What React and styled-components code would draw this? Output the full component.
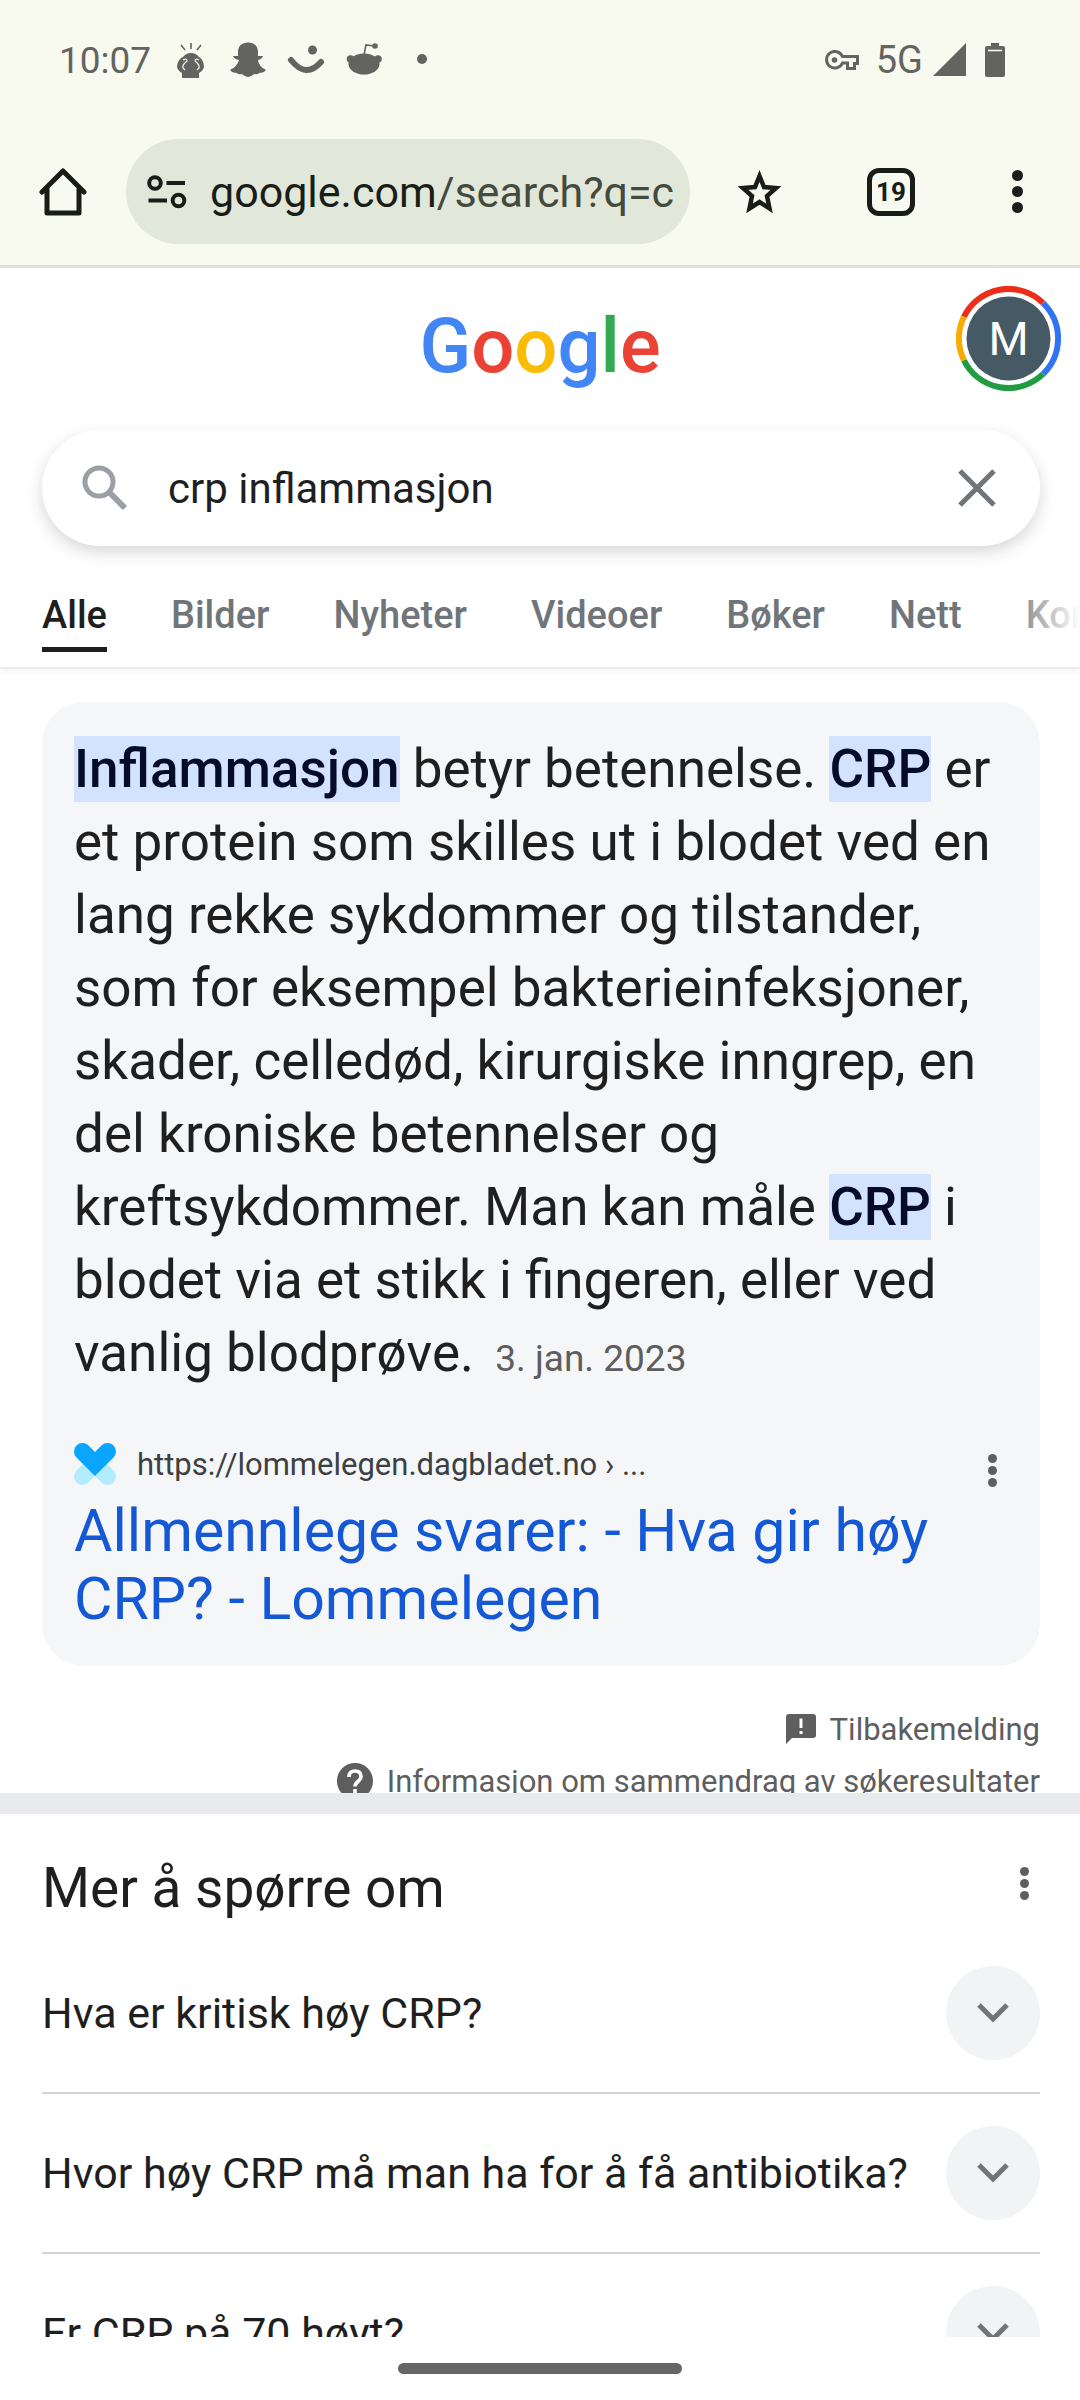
import React from "react";
import styled, { createGlobalStyle, css } from "styled-components";

const COLORS = {
  chrome: "#f8faf0",
  pill: "#e1e7d9",
  ink: "#191d17",
  status: "#63645f",
  text: "#1f1f1f",
  muted: "#70757a",
  grey: "#5e5e5e",
  link: "#1558d6",
  card: "#f5f6f8",
  mark: "#d3e3fd",
};

const TABS = ["Alle", "Bilder", "Nyheter", "Videoer", "Bøker", "Nett", "Kort"];

const QUESTIONS = [
  "Hva er kritisk høy CRP?",
  "Hvor høy CRP må man ha for å få antibiotika?",
  "Er CRP på 70 høyt?",
];

const LOGO = [
  ["G", "#4285f4"],
  ["o", "#ea4335"],
  ["o", "#fbbc05"],
  ["g", "#4285f4"],
  ["l", "#34a853"],
  ["e", "#ea4335"],
];

function MoreDots({ size, gap }) {
  const r = size / 2;
  const height = size * 3 + gap * 2;
  return (
    <svg width={size} height={height} fill="currentColor" aria-hidden="true">
      <circle cx={r} cy={r} r={r} />
      <circle cx={r} cy={height / 2} r={r} />
      <circle cx={r} cy={height - r} r={r} />
    </svg>
  );
}

function StatusBar() {
  return (
    <Status>
      <StatusGroup>
        <Clock>10:07</Clock>
        <NotificationIcons />
      </StatusGroup>
      <StatusGroup>
        <svg width="34" height="20" viewBox="0 0 34 20" fill="none" stroke="currentColor" strokeWidth="3">
          <path d="M17.5 6.5H32.5V13.5H29.5V18.5H22.5V13H17.5A8.3 8.3 0 1 1 17.5 6.5Z" />
          <circle cx="9.5" cy="10" r="2.8" fill="currentColor" stroke="none" />
        </svg>
        <Network>5G</Network>
        <svg width="72" height="36" viewBox="0 0 72 36" fill="currentColor">
          <path d="M0 34L33 1V34Z" />
          <path d="M58 1H66V4H70Q72 4 72 6V33Q72 35 70 35H54Q52 35 52 33V6Q52 4 54 4H58Z" />
          <path d="M55 8.5H69" stroke={COLORS.chrome} strokeWidth="1.6" />
        </svg>
      </StatusGroup>
    </Status>
  );
}

function NotificationIcons() {
  return (
    <svg width="251" height="38" viewBox="177 42 251 38" fill="currentColor">
      {/* stressed head with hands */}
      <path d="M182 79V74Q177 71 177 67Q178 60 183 58Q186 54 191 54Q196 54 199 58Q203 60 204 67Q204 71 199 74V79Z" />
      <g fill="none" stroke={COLORS.chrome} strokeWidth="1.2">
        <path d="M183 61Q187 59 187 62Q182 66 183 69L185 71" />
        <path d="M199 61Q195 59 195 62Q200 66 199 69L197 71" />
      </g>
      <path d="M191 44V50M181 46L185 51M201 46L197 51" stroke="currentColor" strokeWidth="1.6" />
      {/* ghost */}
      <path d="M248 43.5C254 43.5 258 47 258 53V57L263 57Q262 60 258 61Q259 68 266 71Q264 74 259 74Q258 76 254 75Q251 78 248 78Q245 78 242 75Q238 76 237 74Q232 74 230 71Q237 68 239 61Q234 60 233 57L238 57V53C238 47 242 43.5 248 43.5Z" />
      {/* smile */}
      <path d="M291 61Q306 80 321 63" fill="none" stroke="currentColor" strokeWidth="6" strokeLinecap="round" />
      <circle cx="312.5" cy="51" r="4.5" />
      {/* reddit */}
      <ellipse cx="364" cy="65" rx="15.5" ry="10.5" />
      <circle cx="350.5" cy="60" r="3.8" />
      <circle cx="378" cy="60" r="3.8" />
      <circle cx="375" cy="47" r="2.8" />
      <path d="M364 56L366 46L375 47" fill="none" stroke="currentColor" strokeWidth="1.6" />
      <circle cx="422" cy="60" r="5" />
    </svg>
  );
}

function Toolbar() {
  return (
    <Bar>
      <IconButton aria-label="Hjem">
        <svg width="48" height="48" viewBox="0 0 48 48" fill="none" stroke="currentColor" strokeWidth="5" strokeLinejoin="round" strokeLinecap="round">
          <path d="M3 24L24 3L45 24M8 20V45H40V20" />
        </svg>
      </IconButton>
      <Address>
        <svg width="40" height="34" viewBox="0 0 40 34" fill="none" stroke="currentColor" strokeWidth="4">
          <circle cx="8" cy="8" r="5.8" />
          <circle cx="31.5" cy="25.5" r="5.8" />
          <path d="M19.5 8H38M1.5 25.5H20" />
        </svg>
        <Url>
          google.com<span>/search?q=c</span>
        </Url>
      </Address>
      <Actions>
        <IconButton aria-label="Bokmerke">
          <svg width="46" height="46" viewBox="0 0 46 46" fill="none" stroke="currentColor" strokeWidth="4.5">
            <path d="M23.5 7L28 18L40 19L31 27L33.5 39.5L23.5 33L13.5 39.5L16 27L7 19L19 18Z" />
          </svg>
        </IconButton>
        <TabCount aria-label="Faner">19</TabCount>
        <MenuButton aria-label="Meny">
          <MoreDots size={11} gap={5} />
        </MenuButton>
      </Actions>
    </Bar>
  );
}

function Avatar() {
  return (
    <AvatarButton aria-label="Konto">
      <svg width="105" height="105" viewBox="-52.5 -52.5 105 105" fill="none" strokeWidth="6">
        <path d="M-44.6 -21.7A49.6 49.6 0 0 1 34.4 -35.7" stroke="#ee2d18" />
        <path d="M34.4 -35.7A49.6 49.6 0 0 1 34.4 35.7" stroke="#3174f1" />
        <path d="M34.4 35.7A49.6 49.6 0 0 1 -44.6 21.7" stroke="#219c41" />
        <path d="M-44.6 21.7A49.6 49.6 0 0 1 -44.6 -21.7" stroke="#f9ab00" />
        <circle r="42" fill="#455a64" />
      </svg>
      <Initial>M</Initial>
    </AvatarButton>
  );
}

function Question({ text }) {
  return (
    <QuestionRow>
      <span>{text}</span>
      <Chevron>
        <svg width="32" height="20" viewBox="0 0 32 20" fill="none" stroke="#70757a" strokeWidth="5">
          <path d="M2 2L16 16L30 2" />
        </svg>
      </Chevron>
    </QuestionRow>
  );
}

function App() {
  return (
    <Screen>
      <GlobalStyle />
      <StatusBar />
      <Toolbar />
      <Page>
        <Header>
          <Logo href="#" aria-label="Google">
            {LOGO.map(([letter, color], i) => (
              <Letter key={i} $color={color}>
                {letter}
              </Letter>
            ))}
          </Logo>
          <Avatar />
        </Header>
        <SearchBox>
          <svg width="46" height="46" viewBox="0 0 46 46" fill="none" stroke="#9aa0a6" strokeWidth="5">
            <circle cx="17" cy="17" r="14" />
            <path d="M27 27L43 43" strokeWidth="6" />
          </svg>
          <SearchInput aria-label="Søk" defaultValue="crp inflammasjon" />
          <IconButton aria-label="Tøm" type="button">
            <svg width="38" height="38" viewBox="0 0 38 38" stroke="#70757a" strokeWidth="5">
              <path d="M2 2L36 36M36 2L2 36" />
            </svg>
          </IconButton>
        </SearchBox>
        <Tabs>
          {TABS.map((tab, i) => (
            <Tab href="#" key={tab} $active={i === 0}>
              {tab}
            </Tab>
          ))}
        </Tabs>

        <Card>
          <Snippet>
            <Mark>Inflammasjon</Mark> betyr betennelse. <Mark>CRP</Mark> er
            <br />
            et protein som skilles ut i blodet ved en
            <br />
            lang rekke sykdommer og tilstander,
            <br />
            som for eksempel bakterieinfeksjoner,
            <br />
            skader, celledød, kirurgiske inngrep, en
            <br />
            del kroniske betennelser og
            <br />
            kreftsykdommer. Man kan måle <Mark>CRP</Mark> i
            <br />
            blodet via et stikk i fingeren, eller ved
            <br />
            vanlig blodprøve. <DateText>3. jan. 2023</DateText>
          </Snippet>
          <Source>
            <svg width="42" height="42" viewBox="0 0 42 42" fill="none" strokeWidth="17" strokeLinecap="round">
              <path d="M8.5 33.5L21 21L33.5 33.5" stroke="#b3ebff" />
              <path d="M8.5 8.5L21 21L33.5 8.5" stroke="#0aa5ff" />
            </svg>
            <SourceUrl>https://lommelegen.dagbladet.no › ...</SourceUrl>
            <MoreButton aria-label="Om resultatet">
              <MoreDots size={9} gap={3} />
            </MoreButton>
          </Source>
          <ResultLink href="#">
            Allmennlege svarer: - Hva gir høy
            <br />
            CRP? - Lommelegen
          </ResultLink>
        </Card>

        <Notes>
          <Note href="#">
            <svg width="30" height="30" viewBox="0 0 30 30" fill="currentColor">
              <path d="M3 0H27Q30 0 30 3V21Q30 24 27 24H6L0 30V3Q0 0 3 0Z" />
              <path d="M15 4.5V14M15 17V20" stroke="#fff" strokeWidth="3" />
            </svg>
            Tilbakemelding
          </Note>
          <Note href="#">
            <svg width="36" height="36" viewBox="0 0 36 36">
              <circle cx="18" cy="18" r="18" fill="currentColor" />
              <path d="M12 14Q12 8 18 8Q24 8 24 13.5Q24 16 21 18.5Q18 21 18 23.5M18 26V30" fill="none" stroke="#fff" strokeWidth="3.6" />
            </svg>
            Informasjon om sammendrag av søkeresultater
          </Note>
        </Notes>

        <More>
          <MoreHeader>
            <MoreTitle>Mer å spørre om</MoreTitle>
            <MoreButton aria-label="Flere valg">
              <MoreDots size={9} gap={3} />
            </MoreButton>
          </MoreHeader>
          {QUESTIONS.map((text) => (
            <Question key={text} text={text} />
          ))}
        </More>
      </Page>
      <NavBar>
        <Handle />
      </NavBar>
    </Screen>
  );
}

const GlobalStyle = createGlobalStyle`
  * {
    box-sizing: border-box;
  }
  body {
    margin: 0;
    background: #fff;
    font-family: Roboto, sans-serif;
    color: ${COLORS.text};
  }
  svg {
    display: block;
    flex-shrink: 0;
  }
  button {
    font-family: inherit;
  }
`;

const Screen = styled.div`
  height: 100vh;
  display: flex;
  flex-direction: column;
`;

const Status = styled.header`
  flex-shrink: 0;
  display: flex;
  justify-content: space-between;
  align-items: center;
  height: 120px;
  padding: 0 75px 0 59px;
  background: ${COLORS.chrome};
  color: ${COLORS.status};
`;
const StatusGroup = styled.div`
  display: flex;
  align-items: center;
`;
const Clock = styled.span`
  width: 118px;
  font-size: 37px;
`;
const Network = styled.span`
  padding: 0 10px 0 17px;
  font-size: 38px;
`;

const Bar = styled.nav`
  flex-shrink: 0;
  display: flex;
  align-items: center;
  height: 148px;
  padding: 0 57px 2px 39px;
  background: ${COLORS.chrome};
  border-bottom: 3px solid #e0e4d6;
  color: ${COLORS.ink};
`;
const IconButton = styled.button`
  display: flex;
  padding: 0;
  border: none;
  background: transparent;
  color: inherit;
  cursor: pointer;
`;
const MenuButton = styled(IconButton)`
  margin-left: 12px;
`;
const MoreButton = styled(IconButton)`
  align-self: flex-start;
  padding: 11px 0;
  color: ${COLORS.grey};
`;
const Address = styled.div`
  flex: 1;
  display: flex;
  align-items: center;
  gap: 23px;
  height: 105px;
  margin: 0 46px 0 39px;
  padding: 0 20px 0 21px;
  border-radius: 53px;
  background: ${COLORS.pill};
  overflow: hidden;
  white-space: nowrap;
`;
const Url = styled.span`
  font-size: 43px;

  span {
    color: #434a3e;
  }
`;
const Actions = styled.div`
  display: flex;
  align-items: center;
  gap: 85px;
`;
const TabCount = styled.button`
  width: 48px;
  height: 48px;
  padding: 0;
  border: 5px solid ${COLORS.ink};
  border-radius: 12px;
  background: transparent;
  color: ${COLORS.ink};
  font-size: 26px;
  font-weight: 700;
  line-height: 36px;
`;

const Page = styled.main`
  flex: 1;
  min-height: 0;
  overflow: hidden;
`;
const Header = styled.div`
  position: relative;
  display: flex;
  justify-content: center;
  height: 162px;
  padding-top: 32px;
`;
const Logo = styled.a`
  font-size: 76px;
  font-weight: 500;
  line-height: 92px;
  text-decoration: none;
`;
const Letter = styled.span`
  color: ${(props) => props.$color};
`;
const AvatarButton = styled.button`
  position: absolute;
  top: 18px;
  right: 19px;
  padding: 0;
  border: none;
  background: none;
`;
const Initial = styled.span`
  position: absolute;
  inset: 0;
  color: #fff;
  font-size: 46px;
  line-height: 107px;
  text-align: center;
`;

const SearchBox = styled.form`
  display: flex;
  align-items: center;
  gap: 40px;
  height: 116px;
  margin: 0 40px 0 42px;
  padding: 0 44px 0 40px;
  border-radius: 58px;
  background: #fff;
  box-shadow: 0 6px 16px rgba(32, 33, 36, 0.18);
`;
const SearchInput = styled.input`
  flex: 1;
  min-width: 0;
  padding: 0;
  border: none;
  outline: none;
  background: transparent;
  color: ${COLORS.text};
  font-family: inherit;
  font-size: 42px;
`;

const Tabs = styled.nav`
  position: relative;
  display: flex;
  gap: 64px;
  height: 123px;
  padding: 44px 0 0 42px;
  border-bottom: 2px solid #ebebeb;
  box-shadow: 0 4px 6px rgba(0, 0, 0, 0.03);
  overflow: hidden;
  white-space: nowrap;

  /* fades the last tab out at the edge */
  &::after {
    content: "";
    position: absolute;
    inset: 0 0 0 auto;
    width: 70px;
    background: linear-gradient(to right, rgba(255, 255, 255, 0), #fff);
  }
`;
const Tab = styled.a`
  height: 62px;
  color: ${COLORS.muted};
  font-size: 38px;
  font-weight: 500;
  line-height: 50px;
  text-decoration: none;

  ${(props) =>
    props.$active &&
    css`
      color: ${COLORS.text};
      border-bottom: 5px solid ${COLORS.text};
    `}
`;

const Card = styled.article`
  margin: 33px 40px 0 42px;
  padding: 31px 32px 33px;
  border-radius: 42px;
  background: ${COLORS.card};
`;
const Snippet = styled.p`
  margin: 0;
  font-size: 53px;
  line-height: 73px;
  white-space: nowrap;
`;
const Mark = styled.mark`
  padding: 2px 0;
  background: ${COLORS.mark};
  color: #040c28;
  font-weight: 500;
`;
const DateText = styled.span`
  margin-left: 8px;
  color: ${COLORS.grey};
  font-size: 37px;
`;
const Source = styled.div`
  display: flex;
  align-items: center;
  height: 42px;
  margin-top: 48px;
  padding-right: 11px;
`;
const SourceUrl = styled.cite`
  flex: 1;
  padding-left: 21px;
  color: #3c4043;
  font-size: 31px;
  font-style: normal;
`;
const ResultLink = styled.a`
  display: block;
  margin-top: 12px;
  color: ${COLORS.link};
  font-size: 59px;
  line-height: 68px;
  text-decoration: none;
`;

const Notes = styled.div`
  display: flex;
  flex-direction: column;
  align-items: flex-end;
  height: 127px;
  padding: 37px 40px 0 0;
  overflow: hidden;
`;
const Note = styled.a`
  display: flex;
  align-items: center;
  gap: 14px;
  flex-shrink: 0;
  height: 52px;
  color: ${COLORS.grey};
  font-size: 31px;
  text-decoration: none;
`;

const More = styled.section`
  padding: 42px 40px 0 42px;
  border-top: 21px solid #e8eaed;
`;
const MoreHeader = styled.div`
  display: flex;
  align-items: flex-start;
  justify-content: space-between;
  height: 78px;
  padding-right: 11px;
`;
const MoreTitle = styled.h2`
  margin: 0;
  font-size: 55px;
  font-weight: 400;
  line-height: 64px;
`;
const QuestionRow = styled.button`
  width: 100%;
  height: 160px;
  display: flex;
  align-items: center;
  justify-content: space-between;
  padding: 0;
  border: none;
  border-bottom: 2px solid #d2d2d2;
  background: transparent;
  color: ${COLORS.text};
  font-size: 43px;
`;
const Chevron = styled.span`
  display: flex;
  align-items: center;
  justify-content: center;
  width: 94px;
  height: 94px;
  border-radius: 50%;
  background: #f1f3f4;
`;

const NavBar = styled.footer`
  flex-shrink: 0;
  display: flex;
  justify-content: center;
  height: 63px;
  padding-top: 26px;
  background: #fff;
`;
const Handle = styled.div`
  width: 284px;
  height: 11px;
  border-radius: 6px;
  background: #666;
`;

export default App;
